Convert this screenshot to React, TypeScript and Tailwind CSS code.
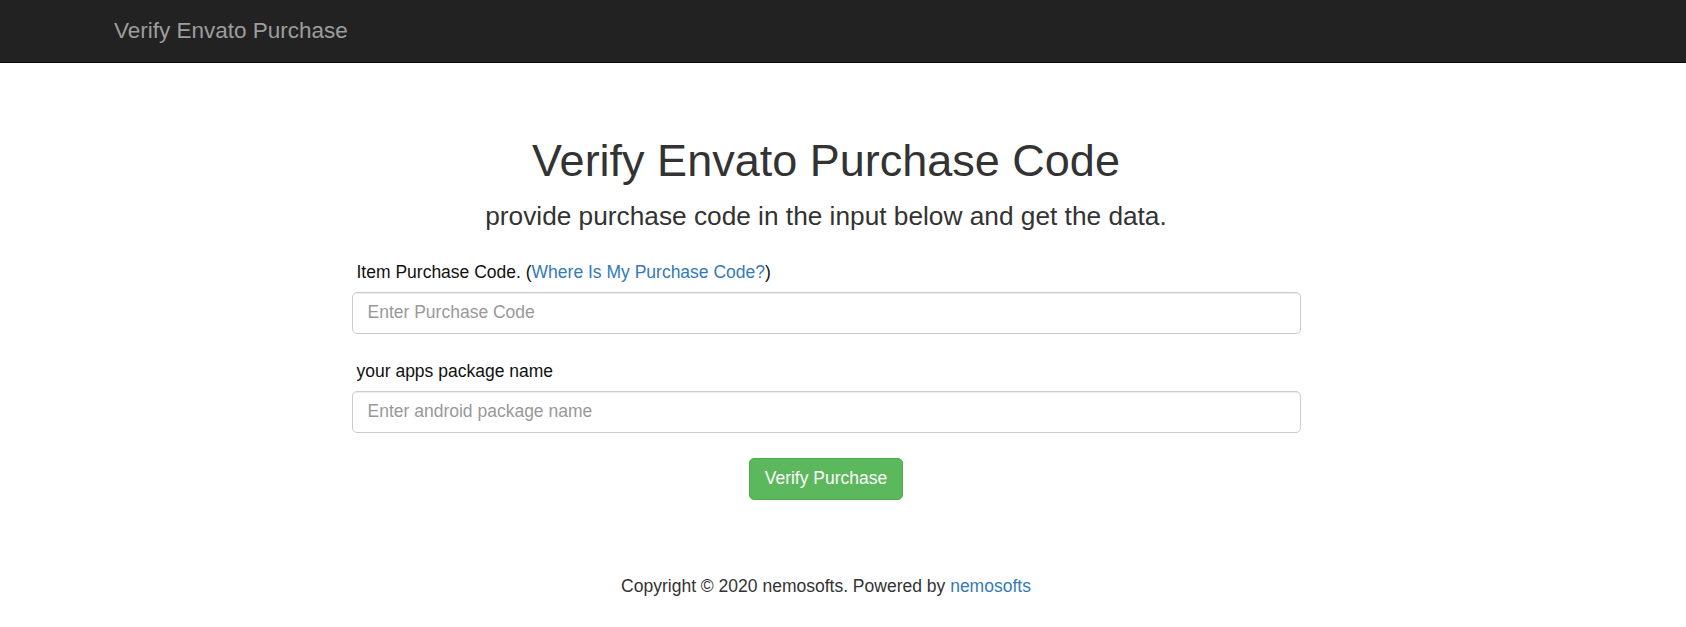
import React from "react";

export default function App() {
  return (
    <div className="min-h-[627px] bg-white" style={{ fontFamily: '"Liberation Sans", Arial, sans-serif' }}>
      <nav className="h-[63px] bg-[#222222] border-b border-[#080808] pr-[34px]">
        <div className="w-[1462px] mx-auto px-[19px] h-full flex items-center">
          <span className="text-[22.5px] leading-[28px] text-[#9d9d9d]">Verify Envato Purchase</span>
        </div>
      </nav>
      <main className="pr-[34px] flex flex-col items-center">
        <h1 className="mt-[73px] text-[45px] leading-[49.5px] text-[#333333] font-normal">Verify Envato Purchase Code</h1>
        <h4 className="mt-[16px] text-[26.25px] leading-[29px] text-[#333333] font-normal">
          provide purchase code in the input below and get the data.
        </h4>
        <form className="w-[949px] mt-[29px] flex flex-col text-[17.5px]">
          <label className="pl-[5px] leading-[25px] text-[#111111]">
            Item Purchase Code. (<a className="text-[#337ab7]" href="#">Where Is My Purchase Code?</a>)
          </label>
          <input
            className="mt-[7px] h-[42px] w-full rounded-[5px] border border-[#cccccc] px-[15px] text-[17.5px] text-[#555555] placeholder:text-[#999999] shadow-[inset_0_1px_1px_rgba(0,0,0,0.075)] outline-none"
            placeholder="Enter Purchase Code"
          />
          <label className="pl-[5px] mt-[25px] leading-[25px] text-[#111111]">your apps package name</label>
          <input
            className="mt-[7px] h-[42px] w-full rounded-[5px] border border-[#cccccc] px-[15px] text-[17.5px] text-[#555555] placeholder:text-[#999999] shadow-[inset_0_1px_1px_rgba(0,0,0,0.075)] outline-none"
            placeholder="Enter android package name"
          />
          <div className="flex justify-center mt-[25px]">
            <button
              type="button"
              className="h-[42px] px-[15px] rounded-[5px] bg-[#5cb85c] border border-[#4cae4c] text-white text-[17.5px] leading-[25px]"
            >
              Verify Purchase
            </button>
          </div>
        </form>
        <footer className="mt-[74px] text-[17.5px] leading-[25px] text-[#333333]">
          Copyright © 2020 nemosofts. Powered by <a className="text-[#337ab7]" href="#">nemosofts</a>
        </footer>
      </main>
    </div>
  );
}
